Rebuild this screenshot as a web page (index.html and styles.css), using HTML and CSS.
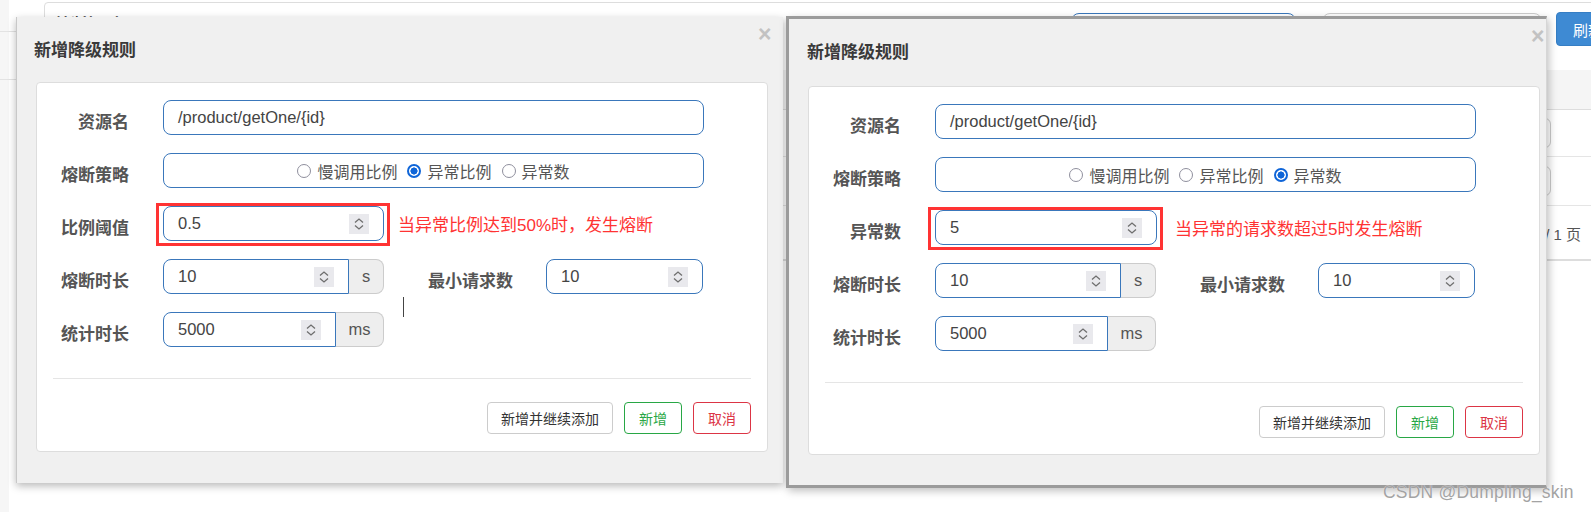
FILE: index.html
```html
<!DOCTYPE html>
<html lang="zh-CN">
<head>
    <meta charset="UTF-8">
    <meta name="viewport" content="width=device-width, initial-scale=1.0">
    <title>新增降级规则</title>
    <link rel="stylesheet" href="styles.css">
</head>
<body>
    <div class="layout">
        <aside class="sidebar">
            <div class="side-item"></div>
            <div class="side-item tall"></div>
        </aside>
        <main class="main">
            <div class="panel">
                <div class="panel-head">
                    <div class="panel-title">熔断规则</div>
                    <div class="toolbar">
                        <div class="field field-blue"></div>
                        <div class="field field-grey"></div>
                        <button class="btn-refresh">刷新</button>
                    </div>
                </div>
                <div class="grid-head"></div>
                <div class="grid-row"><div class="mini-input"></div></div>
                <div class="grid-row tall"><div class="mini-input"></div></div>
                <div class="pager">共 1 条记录，第 1 / 1 页</div>
            </div>
        </main>
    </div>

    <!-- dialog 1: 异常比例 -->
    <div class="modal modal-a">
        <div class="modal-head">
            <h4 class="modal-title">新增降级规则</h4>
            <span class="close">×</span>
        </div>
        <div class="modal-body">
            <div class="rule-form">
                <div class="form-row">
                    <label class="form-label">资源名</label>
                    <div class="text-input wide">/product/getOne/{id}</div>
                </div>
                <div class="form-row">
                    <label class="form-label">熔断策略</label>
                    <div class="text-input wide radio-box">
                        <span class="radio"><i class="dot"></i>慢调用比例</span>
                        <span class="radio"><i class="dot checked"></i>异常比例</span>
                        <span class="radio"><i class="dot"></i>异常数</span>
                    </div>
                </div>
                <div class="form-row">
                    <label class="form-label">比例阈值</label>
                    <div class="mark">
                        <div class="text-input num w221">0.5<span class="spin"><svg width="20" height="20" viewBox="0 0 20 20"><path d="M6 8.5L10 5l4 3.5M6 11.5L10 15l4-3.5" fill="none" stroke="#6e6e6e" stroke-width="1.3"/></svg></span></div>
                    </div>
                    <span class="hint">当异常比例达到50%时，发生熔断</span>
                </div>
                <div class="form-row">
                    <label class="form-label">熔断时长</label>
                    <div class="text-input num with-addon w186">10<span class="spin"><svg width="20" height="20" viewBox="0 0 20 20"><path d="M6 8.5L10 5l4 3.5M6 11.5L10 15l4-3.5" fill="none" stroke="#6e6e6e" stroke-width="1.3"/></svg></span></div>
                    <span class="addon w35">s</span>
                    <label class="form-label inline">最小请求数</label>
                    <div class="text-input num w157">10<span class="spin"><svg width="20" height="20" viewBox="0 0 20 20"><path d="M6 8.5L10 5l4 3.5M6 11.5L10 15l4-3.5" fill="none" stroke="#6e6e6e" stroke-width="1.3"/></svg></span></div>
                </div>
                <div class="form-row">
                    <label class="form-label">统计时长</label>
                    <div class="text-input num with-addon w173">5000<span class="spin"><svg width="20" height="20" viewBox="0 0 20 20"><path d="M6 8.5L10 5l4 3.5M6 11.5L10 15l4-3.5" fill="none" stroke="#6e6e6e" stroke-width="1.3"/></svg></span></div>
                    <span class="addon w48">ms</span>
                </div>
                <span class="caret"></span>
            </div>
            <div class="divider"></div>
            <div class="actions">
                <button class="btn">新增并继续添加</button>
                <button class="btn btn-ok">新增</button>
                <button class="btn btn-cancel">取消</button>
            </div>
        </div>
    </div>

    <!-- dialog 2: 异常数 -->
    <div class="modal modal-b">
        <div class="modal-head">
            <h4 class="modal-title">新增降级规则</h4>
            <span class="close">×</span>
        </div>
        <div class="modal-body">
            <div class="rule-form">
                <div class="form-row">
                    <label class="form-label">资源名</label>
                    <div class="text-input wide">/product/getOne/{id}</div>
                </div>
                <div class="form-row">
                    <label class="form-label">熔断策略</label>
                    <div class="text-input wide radio-box">
                        <span class="radio"><i class="dot"></i>慢调用比例</span>
                        <span class="radio"><i class="dot"></i>异常比例</span>
                        <span class="radio"><i class="dot checked"></i>异常数</span>
                    </div>
                </div>
                <div class="form-row">
                    <label class="form-label">异常数</label>
                    <div class="mark">
                        <div class="text-input num w222">5<span class="spin"><svg width="20" height="20" viewBox="0 0 20 20"><path d="M6 8.5L10 5l4 3.5M6 11.5L10 15l4-3.5" fill="none" stroke="#6e6e6e" stroke-width="1.3"/></svg></span></div>
                    </div>
                    <span class="hint">当异常的请求数超过5时发生熔断</span>
                </div>
                <div class="form-row">
                    <label class="form-label">熔断时长</label>
                    <div class="text-input num with-addon w186">10<span class="spin"><svg width="20" height="20" viewBox="0 0 20 20"><path d="M6 8.5L10 5l4 3.5M6 11.5L10 15l4-3.5" fill="none" stroke="#6e6e6e" stroke-width="1.3"/></svg></span></div>
                    <span class="addon w35">s</span>
                    <label class="form-label inline">最小请求数</label>
                    <div class="text-input num w157">10<span class="spin"><svg width="20" height="20" viewBox="0 0 20 20"><path d="M6 8.5L10 5l4 3.5M6 11.5L10 15l4-3.5" fill="none" stroke="#6e6e6e" stroke-width="1.3"/></svg></span></div>
                </div>
                <div class="form-row">
                    <label class="form-label">统计时长</label>
                    <div class="text-input num with-addon w173">5000<span class="spin"><svg width="20" height="20" viewBox="0 0 20 20"><path d="M6 8.5L10 5l4 3.5M6 11.5L10 15l4-3.5" fill="none" stroke="#6e6e6e" stroke-width="1.3"/></svg></span></div>
                    <span class="addon w48">ms</span>
                </div>
            </div>
            <div class="divider"></div>
            <div class="actions">
                <button class="btn">新增并继续添加</button>
                <button class="btn btn-ok">新增</button>
                <button class="btn btn-cancel">取消</button>
            </div>
        </div>
    </div>

    <div class="watermark">CSDN @Dumpling_skin</div>
</body>
</html>
```

FILE: styles.css
```css
body {
    margin: 0;
    width: 1591px;
    height: 512px;
    overflow: hidden;
    position: relative;
    background: #fff;
    color: #333;
    font-family: "Liberation Sans", "Noto Sans CJK SC", sans-serif;
}

/* page behind the dialogs */
.layout {
    display: flex;
    height: 512px;
}
.sidebar {
    width: 44px;
    flex: none;
    background: linear-gradient(to right, #f6f6f6 9px, #fff 9px);
}
.side-item {
    height: 31px;
    border-bottom: 1px solid #e3e3e3;
}
.side-item.tall {
    height: 47px;
}
.main {
    flex: none;
    padding-top: 2px;
}
.panel {
    width: 1600px;
    border: 1px solid #ddd;
    border-radius: 4px;
    box-sizing: border-box;
}
.panel-head {
    display: flex;
    align-items: flex-start;
    height: 67px;
    padding: 9px 11px 0 10px;
    box-sizing: border-box;
}
.panel-title {
    font-size: 16px;
    font-weight: bold;
    line-height: 26px;
    color: #333;
}
.toolbar {
    margin-left: auto;
    display: flex;
    align-items: flex-start;
}
.field {
    height: 34px;
    margin-top: 1px;
    border: 1px solid #ccc;
    border-radius: 8px;
    box-sizing: border-box;
}
.field-blue {
    width: 225px;
    margin-right: 26px;
    border-color: #3a77bb;
}
.field-grey {
    width: 220px;
    margin-right: 14px;
}
.btn-refresh {
    width: 76px;
    height: 34px;
    padding: 0 0 0 16px;
    text-align: left;
    border: 1px solid #367ec4;
    border-radius: 4px;
    background: #3e8ad3;
    color: #fff;
    font-family: inherit;
    font-size: 15px;
}
.grid-head {
    height: 39px;
    background: #f5f5f5;
    border-bottom: 1px solid #ddd;
}
.grid-row {
    height: 46px;
    display: flex;
    align-items: center;
    justify-content: flex-end;
    padding-right: 92px;
    border-bottom: 1px solid #e5e5e5;
}
.grid-row.tall {
    height: 48px;
}
.mini-input {
    width: 80px;
    height: 28px;
    border: 1px solid #ccc;
    border-radius: 6px;
}
.pager {
    height: 54px;
    display: flex;
    align-items: center;
    justify-content: flex-end;
    padding-right: 62px;
    padding-top: 2px;
    box-sizing: border-box;
    border-bottom: 1px solid #ddd;
    font-size: 15px;
    color: #555;
}

/* dialogs */
.modal {
    position: absolute;
    background: #f0f0f0;
    box-sizing: border-box;
}
.modal-a {
    left: 16px;
    top: 17px;
    width: 767px;
    height: 466px;
    border-left: 1px solid #c8c8c8;
    box-shadow: 0 3px 8px rgba(0, 0, 0, 0.28);
    z-index: 1;
}
.modal-b {
    left: 786px;
    top: 16px;
    width: 761px;
    height: 472px;
    border: 3px solid #9b9b9b;
    border-right: 1px solid #d6d6d6;
    box-shadow: 2px 3px 8px rgba(0, 0, 0, 0.25);
    z-index: 2;
}
.modal-head {
    position: relative;
    height: 62px;
    display: flex;
    align-items: center;
    padding-left: 18px;
}
.modal-a .modal-head {
    padding-left: 17px;
}
.modal-title {
    margin: 0;
    font-size: 17px;
    font-weight: bold;
    color: #3a3a3a;
}
.close {
    position: absolute;
    left: 742px;
    top: 6px;
    font-size: 23px;
    font-weight: bold;
    line-height: 23px;
    color: #c2c2c2;
}
.modal-a .close {
    left: 741px;
}
.modal-body {
    margin: 3px 0 0 19px;
    width: 732px;
    height: 370px;
    background: #fff;
    border: 1px solid #ddd;
    border-radius: 4px;
    box-sizing: border-box;
}
.modal-b .modal-body {
    margin-top: 5px;
    margin-left: 19px;
    height: 369px;
}
.rule-form {
    position: relative;
    padding-top: 17px;
}
.form-row {
    display: flex;
    align-items: center;
    height: 35px;
    margin-bottom: 18px;
}
.form-row:last-of-type {
    margin-bottom: 0;
}
.form-label {
    width: 92px;
    flex: none;
    margin-right: 34px;
    padding-top: 6px;
    text-align: right;
    font-size: 17px;
    font-weight: bold;
    color: #555;
}
.form-label.inline {
    width: auto;
    margin: 0 33px 0 44px;
}
.text-input {
    height: 35px;
    flex: none;
    display: flex;
    align-items: center;
    padding-left: 14px;
    box-sizing: border-box;
    border: 1px solid #3a77bb;
    border-radius: 8px;
    background: #fff;
    font-size: 16.5px;
    color: #444;
}
.wide {
    width: 541px;
}
.w221 { width: 221px; }
.w222 { width: 222px; }
.w186 { width: 186px; }
.w173 { width: 173px; }
.w157 { width: 157px; }
.spin {
    margin-left: auto;
    margin-right: 14px;
    width: 20px;
    height: 20px;
    background: #e9e9ed;
    display: flex;
}
.with-addon {
    border-radius: 8px 0 0 8px;
}
.addon {
    height: 35px;
    flex: none;
    display: flex;
    align-items: center;
    justify-content: center;
    box-sizing: border-box;
    border: 1px solid #ccc;
    border-left: none;
    border-radius: 0 8px 8px 0;
    background: #eee;
    font-size: 16.5px;
    color: #555;
}
.w35 { width: 35px; }
.w48 { width: 48px; }

.radio-box {
    justify-content: center;
    gap: 10px;
    padding: 0;
    font-size: 16px;
    color: #555;
}
.radio {
    display: flex;
    align-items: center;
}
.dot {
    width: 14px;
    height: 14px;
    margin-right: 6px;
    box-sizing: border-box;
    border: 1.5px solid #8f8f9d;
    border-radius: 50%;
    background: #fff;
}
.dot.checked {
    border: 2px solid #0f65d8;
    background: radial-gradient(circle, #0f65d8 0 3.3px, #fff 3.8px);
}

.mark {
    flex: none;
    border: 3px solid #f33;
    padding: 0 3px 2px 4px;
    margin: -3px -6px -5px -7px;
}
.hint {
    margin-left: 14px;
    font-size: 17px;
    color: #f33;
}
.modal-b .hint {
    margin-left: 18px;
}
.caret {
    position: absolute;
    left: 366px;
    top: 214px;
    width: 1px;
    height: 20px;
    background: #444;
}

.divider {
    height: 1px;
    margin: 31px 16px 0 16px;
    background: #e5e5e5;
}
.actions {
    display: flex;
    justify-content: flex-end;
    gap: 11px;
    margin-top: 23px;
    padding-right: 16px;
}
.btn {
    height: 32px;
    padding: 0 13px;
    border: 1px solid #ccc;
    border-radius: 4px;
    background: #fff;
    color: #333;
    font-family: inherit;
    font-size: 14px;
}
.btn-ok {
    padding: 0 14px;
    border-color: #28a745;
    color: #28a745;
}
.btn-cancel {
    padding: 0 14px;
    border-color: #dc3545;
    color: #dc3545;
}

.watermark {
    position: absolute;
    left: 1383px;
    top: 482px;
    z-index: 3;
    font-size: 17.5px;
    color: #a3a3a3;
    text-shadow: 0 0 1px #fff;
    letter-spacing: 0.2px;
}
```
